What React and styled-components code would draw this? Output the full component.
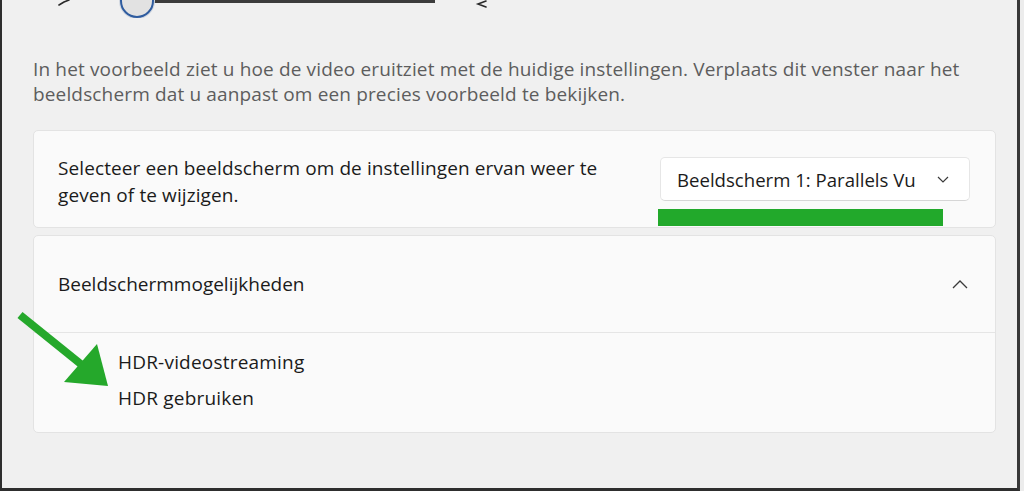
import React from 'react';
import styled, { createGlobalStyle } from 'styled-components';

const GlobalStyle = createGlobalStyle`
  html, body {
    margin: 0;
    padding: 0;
    background: #ececec;
  }
  body {
    font-family: 'Open Sans', 'Noto Sans', sans-serif;
  }
`;

const Frame = styled.div`
  position: relative;
  box-sizing: border-box;
  width: 1020px;
  height: 491px;
  overflow: hidden;
  background: #f0f0f0;
  border-left: 2px solid #2e2e2e;
  border-right: 3px solid #383838;
  border-bottom: 3px solid #2e2e2e;
  padding: 0 21px 0 31px;
  display: flex;
  flex-direction: column;
`;

const SliderRow = styled.div`
  height: 18px;
  overflow: hidden;
  display: flex;
  align-items: flex-end;
  padding-left: 25px;
`;

const SliderIcon = styled.svg`
  align-self: flex-start;
  margin-left: ${(p) => p.offset || 0}px;
  flex: none;
`;

const Thumb = styled.div`
  box-sizing: border-box;
  width: 34px;
  height: 34px;
  flex: none;
  margin-left: 50px;
  border-radius: 50%;
  background: #e2e2e2;
  border: 2px solid #2f5c9f;
  box-shadow: 0 0 0 1px #d0d6e0;
  position: relative;
  z-index: 1;
`;

const Track = styled.div`
  align-self: flex-start;
  width: 285px;
  height: 3px;
  margin-left: -4px;
  background: #3c3c3c;
  flex: none;
`;

const Description = styled.p`
  margin: 39px 0 23px;
  font-size: 19px;
  letter-spacing: 0.15px;
  line-height: 25px;
  color: #5d5d5d;
`;

const Card = styled.div`
  position: relative;
  box-sizing: border-box;
  background: #fafafa;
  border: 1px solid #e3e3e3;
  border-radius: 5px;
  margin-bottom: ${(p) => p.gap || 0}px;
`;

const SelectRow = styled.div`
  height: 96px;
  display: flex;
  align-items: center;
  justify-content: space-between;
  padding: 0 25px 0 24px;
`;

const Label = styled.div`
  font-size: 19px;
  letter-spacing: 0.1px;
  line-height: 27px;
  color: #1b1b1b;
  padding-top: 6px;
`;

const Dropdown = styled.div`
  box-sizing: border-box;
  width: 310px;
  height: 44px;
  background: #ffffff;
  border: 1px solid #e6e6e6;
  border-bottom-color: #d6d6d6;
  border-radius: 5px;
  display: flex;
  align-items: center;
  padding: 0 20px 0 16px;
  gap: 12px;
`;

const DropdownText = styled.span`
  flex: 1;
  overflow: hidden;
  white-space: nowrap;
  font-size: 18.6px;
  color: #1b1b1b;
`;

const Highlight = styled.div`
  position: absolute;
  left: 624px;
  top: 78px;
  width: 285px;
  height: 17px;
  background: #22a92b;
`;

const ExpanderHeader = styled.div`
  height: 96px;
  display: flex;
  align-items: center;
  justify-content: space-between;
  padding: 0 27px 0 24px;
  border-bottom: 1px solid #e5e5e5;
`;

const HeaderTitle = styled.span`
  font-size: 19px;
  color: #1b1b1b;
`;

const ExpanderBody = styled.div`
  display: flex;
  flex-direction: column;
  padding: 11px 0 16px 84px;
`;

const Option = styled.div`
  font-size: 19px;
  letter-spacing: 0.2px;
  line-height: 36px;
  color: #1b1b1b;
`;

const Arrow = styled.svg`
  position: absolute;
  left: 14px;
  top: 308px;
`;

const App = () => {
  return (
    <>
      <GlobalStyle />
      <Frame>
        <SliderRow>
          <SliderIcon width="12" height="6" viewBox="0 0 12 6">
            <path d="M1 5 L6 2 M6 2 L11 0" stroke="#2a2a2a" strokeWidth="1.6" fill="none" strokeLinecap="round" />
          </SliderIcon>
          <Thumb />
          <Track />
          <SliderIcon offset={40} width="13" height="9" viewBox="0 0 13 9">
            <path d="M11 1 L3 4 L11 7" stroke="#2a2a2a" strokeWidth="1.6" fill="none" strokeLinecap="round" />
          </SliderIcon>
        </SliderRow>

        <Description>
          In het voorbeeld ziet u hoe de video eruitziet met de huidige instellingen. Verplaats dit venster naar het
          <br />
          beeldscherm dat u aanpast om een precies voorbeeld te bekijken.
        </Description>

        <Card gap={7}>
          <SelectRow>
            <Label>
              Selecteer een beeldscherm om de instellingen ervan weer te
              <br />
              geven of te wijzigen.
            </Label>
            <Dropdown>
              <DropdownText>Beeldscherm 1: Parallels Vu</DropdownText>
              <svg width="12" height="7" viewBox="0 0 12 7">
                <path d="M1 1 L6 6 L11 1" stroke="#3a3a3a" strokeWidth="1.2" fill="none" />
              </svg>
            </Dropdown>
          </SelectRow>
          <Highlight />
        </Card>

        <Card>
          <ExpanderHeader>
            <HeaderTitle>Beeldschermmogelijkheden</HeaderTitle>
            <svg width="16" height="9" viewBox="0 0 16 9">
              <path d="M1 8 L8 1 L15 8" stroke="#3a3a3a" strokeWidth="1.3" fill="none" />
            </svg>
          </ExpanderHeader>
          <ExpanderBody>
            <Option>HDR-videostreaming</Option>
            <Option>HDR gebruiken</Option>
          </ExpanderBody>
        </Card>

        <Arrow width="100" height="84" viewBox="16 308 100 84">
          <line x1="20" y1="315" x2="82" y2="365" stroke="#25a82b" strokeWidth="8" />
          <polygon points="64,382 97,344 108,386" fill="#25a82b" />
        </Arrow>
      </Frame>
    </>
  );
};

export default App;
